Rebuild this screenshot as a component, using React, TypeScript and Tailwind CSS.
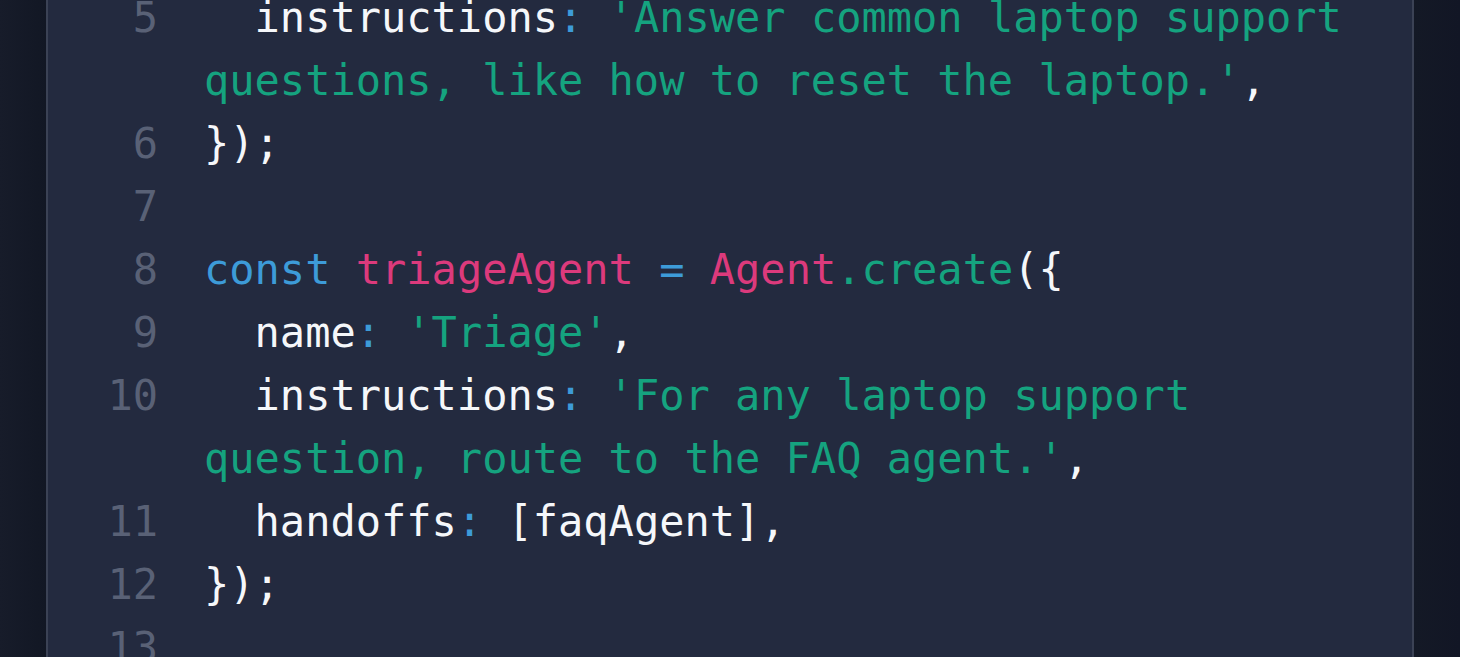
type Token = { t: string; c?: 'w' | 'b' | 'g' | 'p' }

const COLORS = {
  w: 'text-[#f5f7fa]',
  b: 'text-[#3d9bd8]',
  g: 'text-[#15a37f]',
  p: 'text-[#dc3a7c]',
}

const LINES: { n: number; tokens: Token[] }[] = [
  {
    n: 5,
    tokens: [
      { t: '  instructions' },
      { t: ':', c: 'b' },
      { t: ' ' },
      { t: "'Answer common laptop support questions, like how to reset the laptop.'", c: 'g' },
      { t: ',' },
    ],
  },
  { n: 6, tokens: [{ t: '});' }] },
  { n: 7, tokens: [] },
  {
    n: 8,
    tokens: [
      { t: 'const', c: 'b' },
      { t: ' ' },
      { t: 'triageAgent', c: 'p' },
      { t: ' ' },
      { t: '=', c: 'b' },
      { t: ' ' },
      { t: 'Agent', c: 'p' },
      { t: '.create', c: 'g' },
      { t: '({' },
    ],
  },
  {
    n: 9,
    tokens: [
      { t: '  name' },
      { t: ':', c: 'b' },
      { t: ' ' },
      { t: "'Triage'", c: 'g' },
      { t: ',' },
    ],
  },
  {
    n: 10,
    tokens: [
      { t: '  instructions' },
      { t: ':', c: 'b' },
      { t: ' ' },
      { t: "'For any laptop support question, route to the FAQ agent.'", c: 'g' },
      { t: ',' },
    ],
  },
  {
    n: 11,
    tokens: [
      { t: '  handoffs' },
      { t: ':', c: 'b' },
      { t: ' [faqAgent],' },
    ],
  },
  { n: 12, tokens: [{ t: '});' }] },
  { n: 13, tokens: [] },
]

export default function App() {
  return (
    <div className="h-[657px] w-full overflow-hidden bg-[#141a27] flex">
      <div className="w-[46px] shrink-0 bg-gradient-to-r from-[#171c2a] to-[#121724]" />
      <div className="w-[1368px] shrink-0 border-x-2 border-[#3b4255] bg-[#232a3f]">
        <div className="-mt-[14px] pr-[22px] text-[42px] leading-[63px] [font-family:'DejaVu_Sans_Mono',monospace]">
          {LINES.map((line) => (
            <div key={line.n} className="flex">
              <div className="w-[110px] shrink-0 text-right text-[#596176]">{line.n}</div>
              <div className="ml-[46px] flex-1 min-w-0 whitespace-pre-wrap break-words text-[#f5f7fa]">
                {line.tokens.length === 0
                  ? '\u00a0'
                  : line.tokens.map((tok, i) => (
                      <span key={i} className={COLORS[tok.c ?? 'w']}>
                        {tok.t}
                      </span>
                    ))}
              </div>
            </div>
          ))}
        </div>
      </div>
      <div className="flex-1 bg-gradient-to-r from-[#141926] to-[#121625]" />
    </div>
  )
}
